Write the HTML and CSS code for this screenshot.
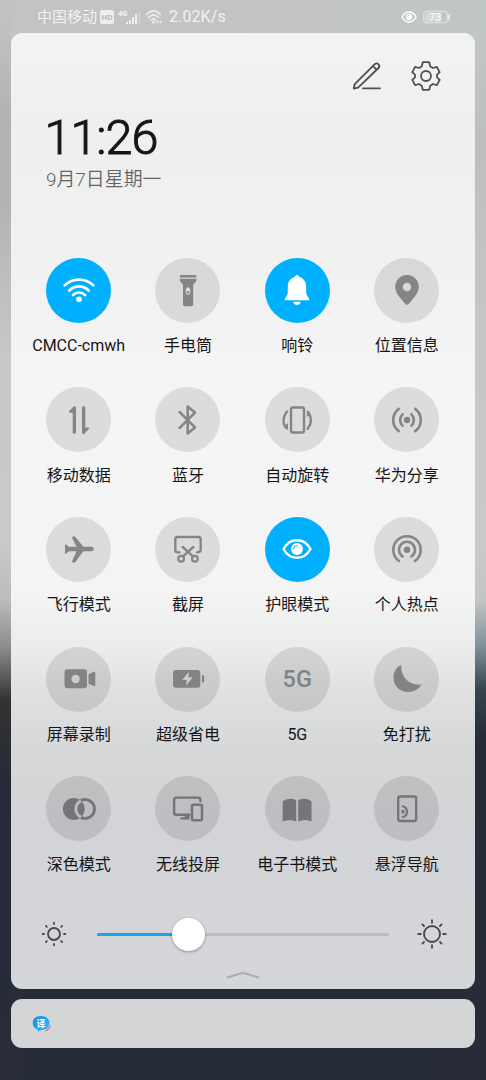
FILE: index.html
```html
<!DOCTYPE html>
<html lang="zh-CN">
<head>
<meta charset="utf-8">
<title>控制中心</title>
<link rel="stylesheet" href="styles.css">
</head>
<body>
<div class="screen">
  <header class="status">
    <span class="carrier">中国移动</span>
    <svg class="hd" viewBox="0 0 14 14"><rect width="14" height="14" rx="2.500" fill="#eee"/><text x="7" y="10.300" text-anchor="middle" class="hd-text">HD</text></svg>
    <svg class="signal" viewBox="0 0 23 20"><text x="0" y="7.500" class="net-text">4G</text><path d="M9 14v2M12 12v4M15 9v7M18 6v10" stroke="#f0f0f0" stroke-width="2"/><path d="M21.500 4v12" stroke="#d4d4d4" stroke-width="1.300"/></svg>
    <svg class="mini-wifi" viewBox="0 0 18 16" fill="none" stroke="#eee" stroke-width="1.700" stroke-linecap="round"><path d="M1.500 5.500Q8.500-1.800 15.500 5.500M3.800 8.300Q8.500 3.500 13.200 8.300M6.200 11Q8.500 8.800 10.800 11"/><circle cx="8.500" cy="13" r=".7"/><path d="M12.500 12.500v1M15.500 12.500v1"/></svg>
    <span class="speed">2.02K/s</span>
    <svg class="mini-eye" viewBox="0 0 16 14" fill="none" stroke="#fff"><path d="M1 7C4.500.4 11.500.4 15 7C11.500 13.600 4.500 13.600 1 7Z" stroke-width="1.400"/><circle cx="8" cy="7" r="3.200" fill="#fff" stroke="none"/><path d="M6.500 7A1.700 1.700 0 0 1 8 5.300" stroke="#bbc0bd" stroke-width=".8"/></svg>
    <svg class="mini-battery" viewBox="0 0 28 14"><rect x=".7" y="1.200" width="23.500" height="11.600" rx="2.500" fill="none" stroke="#e4e7e5"/><rect x="2" y="2.500" width="16.500" height="9" rx="1" fill="#d6dad7"/><path d="M26 4v6.500" stroke="#eee" stroke-width="1.500"/><text x="12.200" y="10.800" text-anchor="middle" class="level">73</text></svg>
  </header>

  <main class="panel">
    <div class="actions">
      <svg class="action" viewBox="-16 -16 32 32"><path d="M-13.200 12.500L-12.500 8.400L7.800-11.800Q9.700-13.400 11.500-11.700T11.500-8L-8.900 11.600ZM6-9.900L9.600-6.300M-4 12.400H13"/></svg>
      <svg class="action" viewBox="-16 -16 32 32"><path d="M-3.200-13.800H3.200L4.300-9.600L7-8L10.900-9.100L13.700-3.700L11-1.400V1.400L13.700 3.900L10.900 9.100L7 8L4.300 9.700L3.200 13.800H-3.200L-4.300 9.700L-7 8L-10.900 9.100L-13.700 3.900L-11 1.400V-1.400L-13.700-3.700L-10.900-9.100L-7-8L-4.300-9.600Z"/><circle r="5"/></svg>
    </div>
    <div class="clock">11:26</div>
    <div class="date">9月7日星期一</div>

    <div class="toggles">
      <div class="toggle"><div class="disc on"><svg class="icon line" viewBox="-20 -20 40 40"><path stroke-width="2.700" d="M-14.300-4.600A20.500 20.500 0 0 1 14.300-4.600M-9.800.6A13.500 13.500 0 0 1 9.800.6M-6 5A8.500 8.500 0 0 1 6 5"/><circle class="solid" cy="9.300" r="2.800"/></svg></div><span class="name">CMCC-cmwh</span></div>
      <div class="toggle"><div class="disc"><svg class="icon" viewBox="-20 -20 40 40"><path d="M-8.200-12.500V-13.500Q-8.200-15-6.700-15H7Q8.500-15 8.500-13.500V-12.500ZM-8.200-11.200H8.500V-9.800Q8-7.500 5.200-5.500V14.800Q5.200 16.200 3.800 16.200H-3.600Q-5 16.200-5 14.800V-5.500Q-7.800-7.500-8.200-9.800Z"/><ellipse class="hole" cy="1" rx="2.300" ry="3.800"/><circle cy="2.200" r="1.300"/></svg></div><span class="name">手电筒</span></div>
      <div class="toggle"><div class="disc on"><svg class="icon" viewBox="-20 -20 40 40"><path d="M0-15Q1.600-15 2.400-13C6.500-11.800 9-8.500 9.200-4V2.500C9.300 6 12.200 7 12.300 10.200H-12.200C-12.200 7-9.300 6-9.200 2.500V-4C-9-8.500-6.500-11.800-2.400-13Q-1.600-15 0-15ZM-3.700 11.800H3.700Q3 15 0 15T-3.700 11.800Z"/></svg></div><span class="name">响铃</span></div>
      <div class="toggle"><div class="disc"><svg class="icon" viewBox="-20 -20 40 40"><path fill-rule="evenodd" d="M0-15A11.800 11.800 0 0 1 11.800-3.200C11.800 3.500 5.500 9.500 1.300 14.300Q0 15.800-1.300 14.300C-5.500 9.500-11.800 3.500-11.800-3.200A11.800 11.800 0 0 1 0-15ZM0-7.200A4.200 4.200 0 1 0 0 1.200A4.200 4.200 0 1 0 0-7.200Z"/></svg></div><span class="name">位置信息</span></div>

      <div class="toggle"><div class="disc"><svg class="icon" viewBox="-20 -20 40 40"><path d="M-3-12.400V12.300Q-3 13.800-4.700 13.800T-6.300 12.300V-7.300H-9.200Q-10.800-7.600-9.800-9L-5.300-13.400Q-3.300-14.300-3-12.400ZM3-12.400Q3.300-13.700 4.700-13.700T6.300-12.300V7.500H9.400Q10.900 7.700 9.900 9L5 13.900Q3.200 14.700 3 12.800Z"/></svg></div><span class="name">移动数据</span></div>
      <div class="toggle"><div class="disc"><svg class="icon line" viewBox="-20 -20 40 40"><path stroke-width="2.600" d="M-8.300-7.800L7 7.400L-.3 13.400V-13.400L7-7.400L-8.300 7.800"/></svg></div><span class="name">蓝牙</span></div>
      <div class="toggle"><div class="disc"><svg class="icon line" viewBox="-20 -20 40 40"><rect x="-6" y="-12.500" width="13" height="25" rx="2" stroke-width="2.400"/><path stroke-width="2.400" d="M-10-8.600Q-16.300-.5-11.500 7M11-8Q17 .7 10.600 8.800"/><path class="solid" d="M-12.300 5.500L-9 3.200V10.200L-13.300 7.200ZM10-9.800L14.300-5.200L9.800-3.200Z"/></svg></div><span class="name">自动旋转</span></div>
      <div class="toggle"><div class="disc"><svg class="icon line" viewBox="-20 -20 40 40"><circle class="solid" r="3.200"/><path stroke-width="2.600" d="M-4.500-5.700A8.200 8.200 0 0 0-4.500 5.700M4.500-5.700A8.200 8.200 0 0 1 4.500 5.700M-8.200-11.100A13.800 13.800 0 0 0-8.200 11.100M8.200-11.100A13.800 13.800 0 0 1 8.200 11.100"/></svg></div><span class="name">华为分享</span></div>

      <div class="toggle"><div class="disc"><svg class="icon" viewBox="-20 -20 40 40"><path d="M-14-5L-10-2.300H-2.500L-7-11.300Q-6-13.700-3.800-12.200L4.300-2.300H12.500Q14.800-2 14.800 0T12.500 2.300H4.300L-3.800 13.200Q-6 14.700-7 12.300L-2.500 2.300H-10L-14 5.300Z"/></svg></div><span class="name">飞行模式</span></div>
      <div class="toggle"><div class="disc"><svg class="icon line" viewBox="-20 -20 40 40"><path stroke-width="2.400" d="M-8.500 3.400H-10.300Q-12.700 3.400-12.700 1V-9.500Q-12.700-12-10.300-12H10.300Q12.700-12 12.700-9.500V1Q12.700 3.200 9 3.400M-5.300-2L5 7.300M5.300-2L-5 7.300"/><circle cx="-6.900" cy="9.700" r="2.900" stroke-width="2.200"/><circle cx="6.900" cy="9.700" r="2.900" stroke-width="2.200"/></svg></div><span class="name">截屏</span></div>
      <div class="toggle"><div class="disc on"><svg class="icon line" viewBox="-20 -20 40 40"><path stroke-width="2.400" d="M-13.500 0C-7-11.700 7-11.700 13.500 0C7 11.700-7 11.700-13.500 0Z"/><circle class="solid" r="6"/><path class="shine" d="M-3.500 0A3.700 3.700 0 0 1 0-3.700"/></svg></div><span class="name">护眼模式</span></div>
      <div class="toggle"><div class="disc"><svg class="icon line" viewBox="-20 -20 40 40"><circle class="solid" cy=".7" r="3.200"/><path stroke-width="2.600" d="M-4.400 7.500A8 8 0 1 1 4.400 7.500M-8 12A13.700 13.700 0 1 1 8 12"/></svg></div><span class="name">个人热点</span></div>

      <div class="toggle"><div class="disc"><svg class="icon" viewBox="-20 -20 40 40"><path fill-rule="evenodd" d="M-11.500-9.800H5Q8-9.800 8-6.800V6.300Q8 9.300 5 9.300H-11.500Q-14.500 9.300-14.500 6.300V-6.800Q-14.500-9.800-11.500-9.800ZM-3.400-4.200A4.200 4.200 0 1 0-3.400 4.200A4.200 4.200 0 1 0-3.400-4.200ZM9.500-4.700L15-7.300Q16.300-7.600 16.300-6.300V6.300Q16.300 7.600 15 7L9.500 4.700Z"/></svg></div><span class="name">屏幕录制</span></div>
      <div class="toggle"><div class="disc"><svg class="icon" viewBox="-20 -20 40 40"><path fill-rule="evenodd" d="M-12-9H9.300Q12.300-9 12.300-6V5.700Q12.300 8.700 9.300 8.700H-12Q-15 8.700-15 5.700V-6Q-15-9-12-9ZM1-7L-5.800 1H-1.200L-2 6.800L4.800-1.700H.3ZM14-3.700H15Q16.200-3.700 16.200-2.500V2.300Q16.200 3.500 15 3.500H14Z"/></svg></div><span class="name">超级省电</span></div>
      <div class="toggle"><div class="disc"><span class="five-g">5G</span></div><span class="name">5G</span></div>
      <div class="toggle"><div class="disc"><svg class="icon" viewBox="-20 -20 40 40"><path d="M-5.700-14.200C-10.500-12-13.500-7.500-13.500-1.600C-13.500 6.800-7 13 1.200 13C7.500 13 12.300 9.600 14.300 5.500C4.500 6.800-6.700 0-5.700-14.200Z"/></svg></div><span class="name">免打扰</span></div>

      <div class="toggle"><div class="disc"><svg class="icon" viewBox="-20 -20 40 40"><mask id="lens"><rect x="-20" y="-20" width="40" height="40" fill="#fff"/><circle cx="6" r="9.200" fill="none" stroke="#000" stroke-width="2.800"/></mask><circle cx="-5.200" r="10.900" mask="url(#lens)"/><path fill="none" stroke="currentColor" stroke-width="3" d="M1.800-8.400A9.400 9.400 0 1 1 1.800 8.400"/></svg></div><span class="name">深色模式</span></div>
      <div class="toggle"><div class="disc"><svg class="icon line" viewBox="-20 -20 40 40"><path stroke-width="2.400" d="M12.500-8V-9Q12.500-11.400 10-11.400H-11.300Q-13.900-11.400-13.900-9V3.400Q-13.900 5.800-11.300 5.800H1.500"/><path class="solid" d="M-3 5.500H1.500V10.500H-7.500Q-8.500 8.800-7 8.500L-3 8Z"/><rect x="4" y="-4.300" width="10" height="15.500" rx="1.500" stroke-width="2.500"/></svg></div><span class="name">无线投屏</span></div>
      <div class="toggle"><div class="disc"><svg class="icon" viewBox="-20 -20 40 40"><path d="M-.8-8.700V12.500Q-7 9.500-14.300 12.500V-7.800Q-7-12-.8-8.700ZM1.200-8.700V12.500Q7.500 9.500 14.500 12.500V-7.800Q7.500-12 1.200-8.700Z"/></svg></div><span class="name">电子书模式</span></div>
      <div class="toggle"><div class="disc"><svg class="icon line" viewBox="-20 -20 40 40"><rect x="-8.800" y="-12.500" width="18" height="24.500" rx="2" stroke-width="2.300"/><path stroke-width="2.200" d="M-4.300-2.700A5.500 5.500 0 0 1-4.300 8"/><path class="solid" d="M-5.500.9Q-2.300.3-2.200 2.700T-5.500 4.500Z"/></svg></div><span class="name">悬浮导航</span></div>
    </div>

    <div class="brightness">
      <svg class="sun" viewBox="-16 -16 32 32"><circle r="6"/><path d="M0-11.300V-10M0 11.300V10M-11.300 0H-10M11.300 0H10M-8-8L-7.200-7.200M8-8L7.200-7.200M-8 8L-7.200 7.200M8 8L7.200 7.200"/></svg>
      <div class="track"><div class="filled"></div><div class="thumb"></div></div>
      <svg class="sun" viewBox="-16 -16 32 32"><circle r="8"/><path d="M0-13.800V-11.200M0 13.800V11.200M-13.800 0H-11.200M13.800 0H11.200M-9.600-9.600L-8-8M9.600-9.600L8-8M-9.600 9.600L-8 8M9.600 9.600L8 8"/></svg>
    </div>
    <svg class="handle" viewBox="0 0 34 10"><path d="M1.500 7.500L15.500 3.200Q17 2.800 18.500 3.200L32.500 7.500"/></svg>
  </main>

  <section class="notice">
    <svg class="app" viewBox="0 0 20 18"><defs><linearGradient id="bubble" x2="1" y2="1"><stop stop-color="#1688ea"/><stop offset="1" stop-color="#20c5ff"/></linearGradient></defs><path d="M18.700 9.500Q19 15.500 12.500 16.500Q17 12.500 18.700 9.500Z" fill="#ed6e93"/><path d="M9 1C14 1 17.500 3.700 17.500 8S14 15 9.500 15L6 16.500L5.500 14.500C2.500 13.500 .7 11.200 .7 8C.7 3.700 4 1 9 1Z" fill="url(#bubble)"/><text x="9" y="11.600" text-anchor="middle" class="app-text">译</text></svg>
  </section>
</div>
</body>
</html>
```

FILE: styles.css
```css
* { box-sizing: border-box; }

body {
  margin: 0;
  font-family: Roboto, "Noto Sans CJK SC", sans-serif;
  color: #151515;
}

.screen {
  display: flex;
  flex-direction: column;
  width: 486px;
  height: 1080px;
  overflow: hidden;
  padding: 0 11px;
  background:
    linear-gradient(to bottom, #c3c3c3 0, #c0c0c0 32px, #b2b2b2 120px, #b3b3b3 200px, #c8c8c8 360px, #cacaca 540px, #babdbb 600px, #888 650px, #333332 700px, #242a37 790px, #282d38 100%) 0 0 / 11px 100% no-repeat,
    linear-gradient(to bottom, #c0c8c3 0, #c0c7c3 32px, #bdbfbc 140px, #c5c5c5 300px, #cacaca 540px, #c3c5c5 600px, #82929a 645px, #35444e 690px, #242c36 740px, #242a37 850px, #282c37 100%) 100% 0 / 11px 100% no-repeat,
    linear-gradient(to right, #c3c3c3 50%, #c0c8c3) 0 0 / 100% 100px no-repeat,
    linear-gradient(to right, #282d38, #222b36 35%, #222b36 65%, #282c37);
}

.status {
  display: flex;
  align-items: center;
  flex: none;
  height: 32.500px;
  padding: 1px 24px 0 26px;
  color: #f2f2f2;
}
.carrier { font-size: 15px; line-height: 20px; }
.hd { width: 14px; height: 14px; margin-left: 3px; }
.hd-text { font: 700 8px Roboto, sans-serif; fill: #b9b9b9; }
.signal { width: 23px; height: 20px; margin: 3px 0 0 4px; }
.net-text { font: 700 7.500px Roboto, sans-serif; fill: #f4f4f4; }
.mini-wifi { width: 18px; height: 16px; margin-left: 4px; }
.speed { margin-left: 6px; font-size: 16px; letter-spacing: .1px; }
.mini-eye { width: 16px; height: 14px; margin-left: auto; }
.mini-battery { width: 28px; height: 14px; margin-left: 6px; }
.level { font: 10.500px Roboto, sans-serif; fill: #fff; }

.panel {
  display: flex;
  flex-direction: column;
  flex: none;
  height: 956px;
  padding: 27px 13.500px 0 13px;
  border-radius: 11px;
  background: linear-gradient(to bottom, #f3f3f3 0, #efefef 90px, #f0f0f0 190px, #f5f5f5 360px, #f4f4f4 560px, #ebecec 615px, #dfe1e1 660px, #d5d7d8 720px, #d2d4d7 790px, #d5d6d9 100%);
}

.actions { display: flex; justify-content: flex-end; gap: 27px; height: 32px; padding-right: 19.500px; }
.action { width: 32px; height: 32px; fill: none; stroke: #505050; stroke-width: 1.800; stroke-linejoin: round; stroke-linecap: round; }

.clock {
  height: 56px;
  margin: 18px 0 0 20.500px;
  font: 300 48.500px/56px Roboto, sans-serif;
  letter-spacing: -1px;
  color: #151515;
  -webkit-text-stroke: 1px #151515;
}

.date { height: 28px; margin: .5px 0 0 22px; font-size: 18.900px; line-height: 28px; font-weight: 350; color: #646464; }

.toggles { display: grid; grid-template-columns: repeat(4, 109.330px); grid-auto-rows: 129.650px; margin-top: 63.700px; }
.toggle { display: flex; flex-direction: column; align-items: center; }
.disc { --glyph: #858585; display: flex; align-items: center; justify-content: center; flex: none; width: 65px; height: 65px; border-radius: 50%; background: rgba(0, 0, 0, .1); color: var(--glyph); }
.toggle:nth-child(n+13) .disc { --glyph: #828383; }
.toggle:nth-child(n+17) .disc { --glyph: #747577; }
.toggle .disc.on { --glyph: #fff; background: #00b0ff; }
.icon { width: 40px; height: 40px; fill: currentColor; }
.line { fill: none; stroke: currentColor; stroke-linecap: round; stroke-linejoin: round; }
.solid { fill: currentColor; stroke: none; }
.hole { fill: #dedede; }
.shine { stroke: #00b0ff; stroke-width: 1; }
.five-g { font-size: 23.500px; font-weight: 500; letter-spacing: .2px; }
.name { margin-top: 11.500px; font-size: 16px; line-height: 24px; white-space: nowrap; }

.brightness { display: flex; align-items: center; height: 34px; margin: 11.500px 13.500px 0 14px; }
.sun { flex: none; width: 32px; height: 32px; fill: none; stroke: #484848; stroke-width: 1.800; stroke-linecap: round; }
.track { position: relative; flex: 1; height: 3px; margin: 0 27px; border-radius: 2px; background: #bcbdc1; }
.filled { width: 31%; height: 3px; border-radius: 2px; background: #19a4e8; }
.thumb { position: absolute; left: 75px; top: -15px; width: 33px; height: 33px; border-radius: 50%; background: #fff; box-shadow: 0 1px 3px rgba(0, 0, 0, .35); }

.handle { width: 34px; height: 10px; margin: 18.500px auto 0; fill: none; stroke: #acaeb1; stroke-width: 2; stroke-linecap: round; }

.notice { display: flex; align-items: center; flex: none; height: 49px; margin-top: 10.500px; padding-left: 21px; border-radius: 11px; background: #d4d5d6; }
.app { width: 20px; height: 18px; }
.app-text { font: 700 9px "Noto Sans CJK SC", sans-serif; fill: #fff; }
```
